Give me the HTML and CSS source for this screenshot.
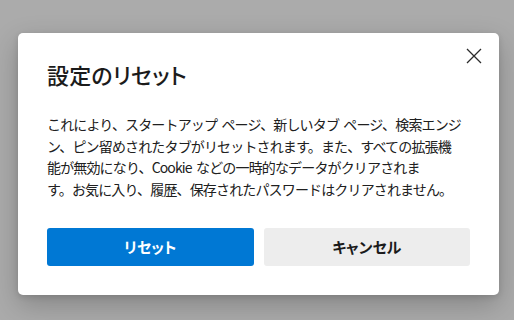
FILE: index.html
```html
<!DOCTYPE html>
<html lang="ja">
<head>
<meta charset="utf-8">
<link rel="stylesheet" href="styles.css">
</head>
<body>
<div class="backdrop">
  <div class="dialog" role="dialog">
    <button class="close" aria-label="閉じる">
      <svg width="16" height="16" viewBox="0 0 16 16"><path d="M1 1L15 15M15 1L1 15" stroke="#2b2b2b" stroke-width="1.3" fill="none"/></svg>
    </button>
    <h1 class="title">設定のリセット</h1>
    <p class="body">これにより、スタートアップ ページ、新しいタブ ページ、検索エンジ<br>ン、ピン留めされたタブがリセットされます。また、すべての拡張機<br>能が無効になり、Cookie などの一時的なデータがクリアされま<br>す。お気に入り、履歴、保存されたパスワードはクリアされません。</p>
    <div class="actions">
      <button class="btn primary">リセット</button>
      <button class="btn secondary">キャンセル</button>
    </div>
  </div>
</div>
</body>
</html>
```
FILE: styles.css
```css
html, body {
  margin: 0;
  padding: 0;
  width: 514px;
  height: 320px;
  overflow: hidden;
  background: #ababab;
}
.backdrop {
  padding: 33px 0 0 18px;
}
.dialog {
  position: relative;
  width: 423px;
  padding: 26px 29px 29px 29px;
  background: #fff;
  border-radius: 5px;
  box-shadow: 0 10px 28px rgba(0,0,0,0.22), 0 2px 6px rgba(0,0,0,0.12);
  font-family: "Noto Sans CJK JP", "Noto Sans", sans-serif;
  color: #1b1b1b;
}
.close {
  position: absolute;
  top: 14px;
  right: 16px;
  width: 18px;
  height: 18px;
  padding: 1px;
  border: 0;
  background: transparent;
  line-height: 0;
}
.title {
  margin: 0;
  font-size: 22px;
  line-height: 30px;
  font-weight: 500;
  font-feature-settings: "palt";
  letter-spacing: 0.2px;
}
.body {
  margin: 25px 0 0 0;
  font-size: 14px;
  line-height: 21.7px;
  letter-spacing: -0.85px;
  word-spacing: 2px;
  color: #202020;
  white-space: nowrap;
}
.actions {
  display: flex;
  gap: 10px;
  margin-top: 27px;
}
.btn {
  flex: 1;
  height: 38px;
  border: 0;
  border-radius: 3px;
  font-family: "Noto Sans CJK JP", "Noto Sans", sans-serif;
  font-size: 15px;
  font-weight: 600;
  font-feature-settings: "palt";
}
.primary {
  background: #0078d4;
  color: #fff;
}
.secondary {
  background: #ededed;
  color: #1b1b1b;
}
```
